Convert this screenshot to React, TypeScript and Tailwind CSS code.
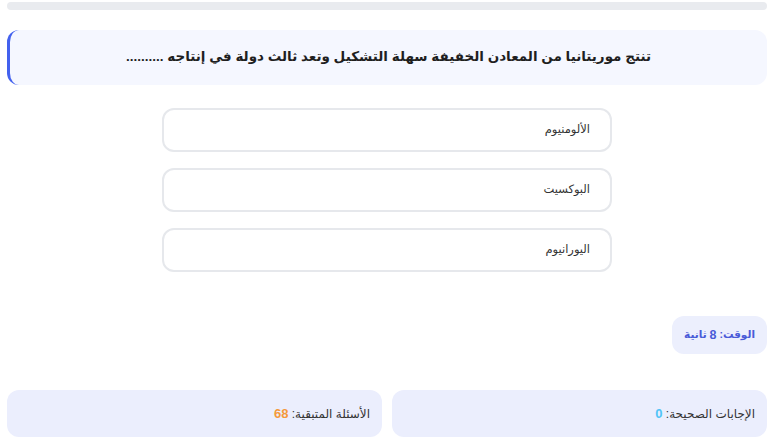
import React from "react";

const options = ["الألومنيوم", "البوكسيت", "اليورانيوم"];

export default function App() {
  return (
    <div
      dir="rtl"
      className="w-[780px] h-[445px] bg-white pl-[7px] pr-[13px] pt-[2px] text-[#222]"
      style={{ fontFamily: '"Liberation Sans", "DejaVu Sans", sans-serif' }}
    >
      {/* Progress */}
      <div className="h-2 w-full rounded-full bg-[#e9ebef]" />

      {/* Question */}
      <div className="mt-5 flex h-[55px] items-center justify-center rounded-xl border-l-[3px] border-[#4361ee] bg-[#f5f7ff]">
        <h2 className="text-[13.5px] font-bold text-[#1f1f1f]">
          تنتج موريتانيا من المعادن الخفيفة سهلة التشكيل وتعد ثالث دولة في إنتاجه ..........
        </h2>
      </div>

      {/* Options */}
      <div className="mx-auto mt-[23px] flex w-[450px] flex-col gap-4">
        {options.map((o) => (
          <button
            key={o}
            className="flex h-11 items-center rounded-xl border-2 border-[#e6e8ec] bg-white px-5 text-right text-[11.5px] text-[#333]"
          >
            {o}
          </button>
        ))}
      </div>

      {/* Timer */}
      <div className="mt-11 flex">
        <div className="flex h-[38px] items-center rounded-xl bg-[#eceffd] px-3 text-[10.5px] font-bold text-[#4a5bd8]">
          الوقت:&nbsp;<span className="text-[12.5px]">8</span>&nbsp;ثانية
        </div>
      </div>

      {/* Stats */}
      <div className="mt-9 grid grid-cols-2 gap-[10px]">
        <div className="flex h-[47px] items-center rounded-xl bg-[#ebeefd] px-3 text-[12px] text-[#333]">
          الإجابات الصحيحة:&nbsp;<span className="text-[13px] font-bold text-[#4fc3f7]">0</span>
        </div>
        <div className="flex h-[47px] items-center rounded-xl bg-[#ebeefd] px-3 text-[12px] text-[#333]">
          الأسئلة المتبقية:&nbsp;<span className="text-[13px] font-bold text-[#f5993b]">68</span>
        </div>
      </div>
    </div>
  );
}
